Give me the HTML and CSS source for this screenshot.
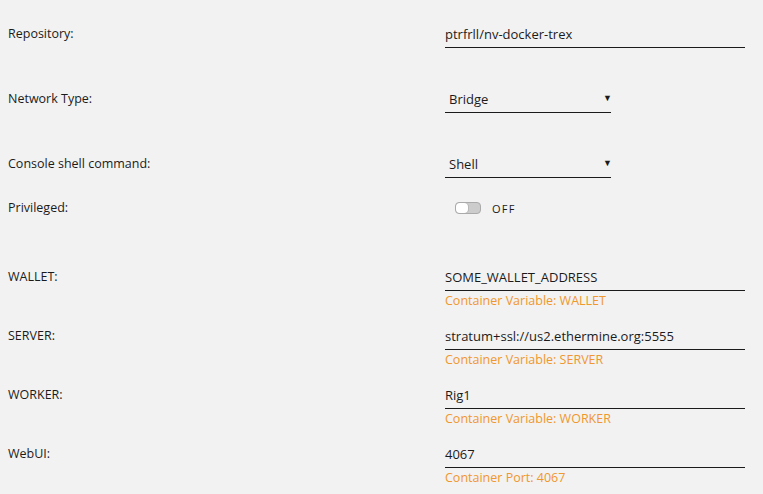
FILE: index.html
```html
<!DOCTYPE html>
<html>
<head>
<meta charset="utf-8">
<link rel="stylesheet" href="styles.css">
</head>
<body>
<div class="form">
  <div class="row r-first">
    <div class="label">Repository:</div>
    <div class="field"><div class="input wide">ptrfrll/nv-docker-trex</div></div>
  </div>
  <div class="row r-sel">
    <div class="label">Network Type:</div>
    <div class="field"><div class="input select">Bridge<span class="arrow">▼</span></div></div>
  </div>
  <div class="row r-sel">
    <div class="label">Console shell command:</div>
    <div class="field"><div class="input select">Shell<span class="arrow">▼</span></div></div>
  </div>
  <div class="row r-priv">
    <div class="label">Privileged:</div>
    <div class="field toggle-field">
      <span class="switch"><span class="knob"></span></span>
      <span class="off">OFF</span>
    </div>
  </div>
  <div class="row r-wallet">
    <div class="label">WALLET:</div>
    <div class="field"><div class="input wide">SOME_WALLET_ADDRESS</div><div class="help">Container Variable: WALLET</div></div>
  </div>
  <div class="row r-var">
    <div class="label">SERVER:</div>
    <div class="field"><div class="input wide">stratum+ssl://us2.ethermine.org:5555</div><div class="help">Container Variable: SERVER</div></div>
  </div>
  <div class="row r-var">
    <div class="label">WORKER:</div>
    <div class="field"><div class="input wide">Rig1</div><div class="help">Container Variable: WORKER</div></div>
  </div>
  <div class="row r-var">
    <div class="label">WebUI:</div>
    <div class="field"><div class="input wide">4067</div><div class="help">Container Port: 4067</div></div>
  </div>
</div>
</body>
</html>
```
FILE: styles.css
```css
html, body {
  margin: 0;
  padding: 0;
  background: #f2f2f2;
}
body {
  padding: 8px;
  font-family: "Open Sans", "Noto Sans", sans-serif;
  font-size: 12.5px;
  color: #1c1b1b;
}
.form {
  display: flex;
  flex-direction: column;
  padding-top: 13px;
}
.row {
  display: flex;
  align-items: flex-start;
}
.r-sel { margin-top: 38px; }
.r-priv { margin-top: 17px; }
.r-wallet { margin-top: 43px; }
.r-var { margin-top: 14px; }
.label {
  width: 437px;
  line-height: 18px;
  padding: 4px 0;
  flex-shrink: 0;
}
.field {
  display: flex;
  flex-direction: column;
}
.input {
  font-size: 13px;
  line-height: 18px;
  padding: 4px 0;
  border-bottom: 1px solid #1c1b1b;
  box-sizing: content-box;
  white-space: nowrap;
}
.wide { width: 300px; }
.select {
  width: 162px;
  padding-left: 4px;
  display: flex;
  justify-content: space-between;
  align-items: center;
}
.arrow {
  font-size: 9px;
  margin-top: -2px;
  margin-right: -1px;
}
.help {
  color: #f0972e;
  line-height: 16px;
  padding-top: 2px;
}
.toggle-field {
  flex-direction: row;
  align-items: center;
  height: 26px;
  padding-left: 10px;
}
.switch {
  width: 24px;
  height: 10px;
  border: 1px solid #aaaaaa;
  border-radius: 4px;
  background: #cccccc;
  display: flex;
  overflow: hidden;
}
.knob {
  width: 12px;
  height: 10px;
  background: #ffffff;
  border-radius: 4px;
  box-shadow: 1px 0 0 #b8b8b8;
}
.off {
  margin-left: 11px;
  font-size: 11px;
  letter-spacing: 1.3px;
}
```
